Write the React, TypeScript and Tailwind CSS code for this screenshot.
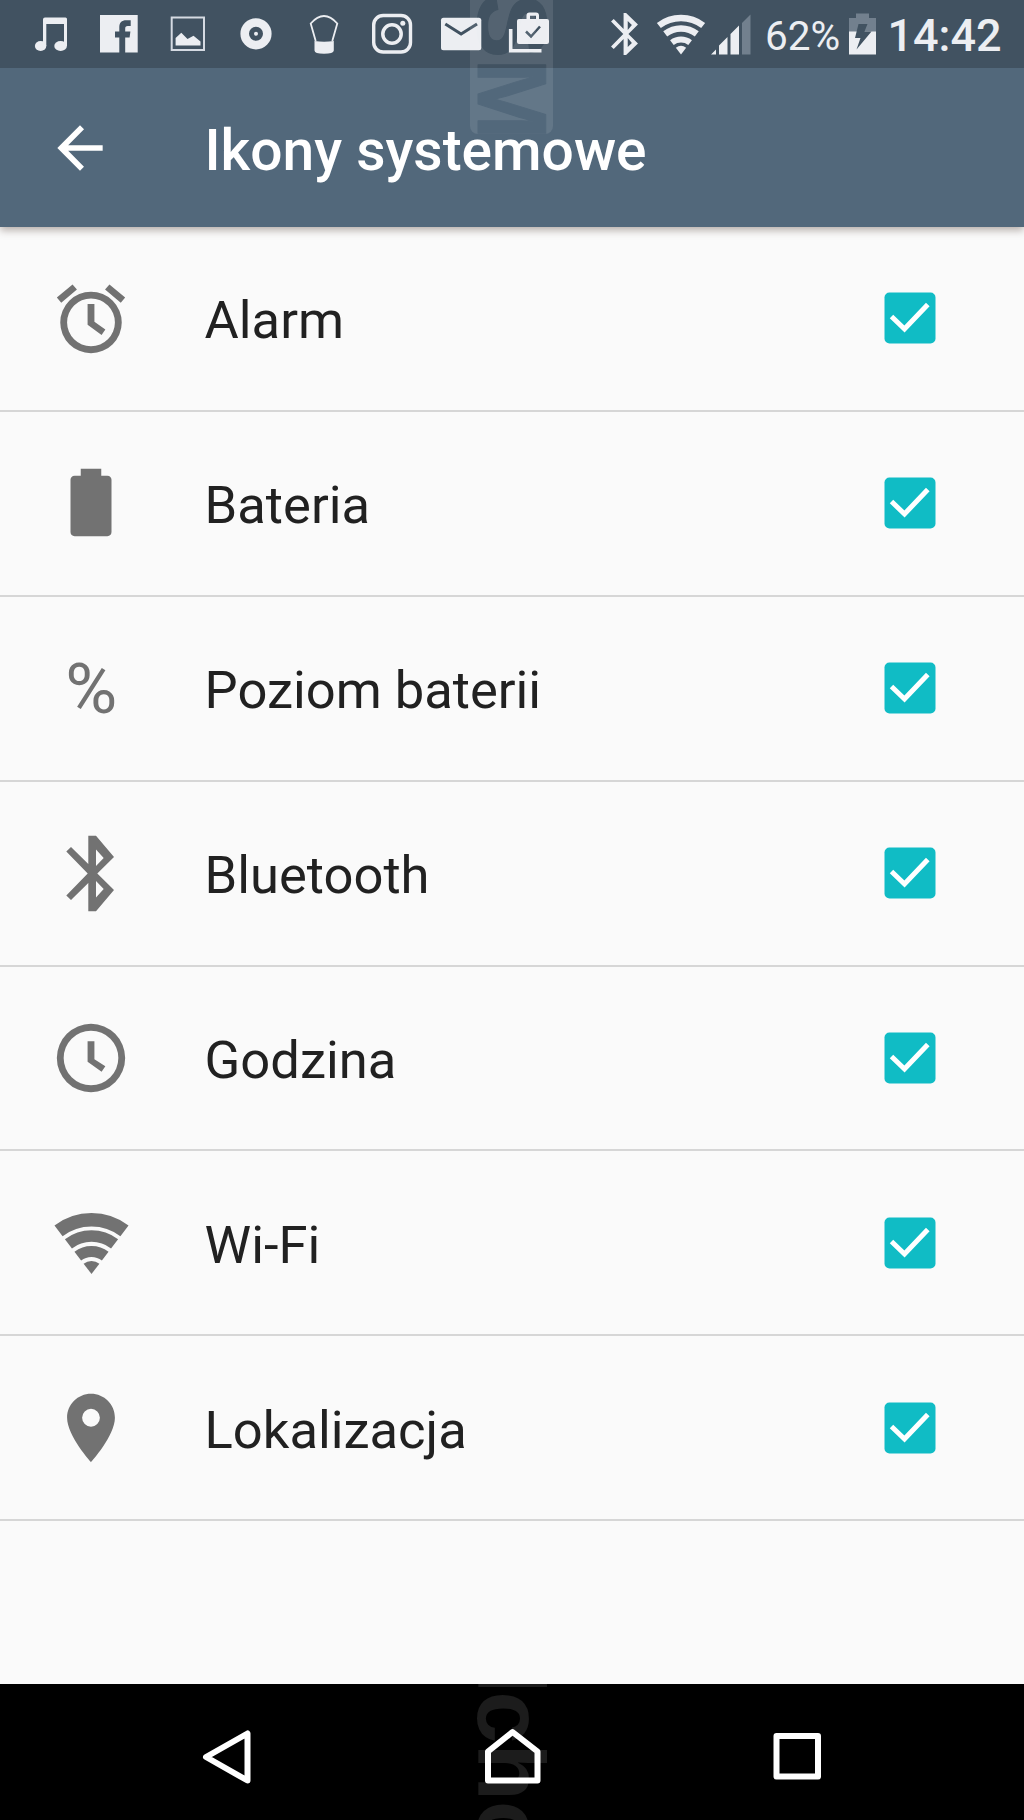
import React, { useState } from "react";

const iconStyle = "w-[82px] h-[82px] shrink-0 fill-[#727272]";
const statusStyle = "w-[68.3px] h-[68px] shrink-0 fill-[#eceef2]";

// Arc of a 75 degree fan whose tip is at 0,0
const arc = (r: number) =>
  `M${-0.607 * r} ${-0.794 * r}A${r} ${r} 0 0 1 ${0.607 * r} ${-0.794 * r}`;

const AlarmIcon = () => (
  <svg viewBox="0 -0.3 24 24" className={iconStyle}>
    <path d="M22 5.72l-4.6-3.86-1.29 1.53 4.6 3.86L22 5.72zM7.88 3.39L6.6 1.86 2 5.71l1.29 1.53 4.59-3.85zM13 7.6h-2v6.1l4.1 2.95 1.1-1.6-3.2-2.25V7.6zM12 4a9 9 0 1 0 0 18 9 9 0 0 0 0-18zm0 16a7 7 0 1 1 0-14 7 7 0 0 1 0 14z" />
  </svg>
);

const BatteryIcon = () => (
  <svg viewBox="0 0 24 24" className={iconStyle}>
    <path d="M16.8 4H15V2H9v2H7.2C6.5 4 6 4.500 6 5.200v15.300c0 .7.5 1.200 1.200 1.200h9.600c.7 0 1.200-.5 1.200-1.200V5.200c0-.7-.5-1.200-1.200-1.200z" />
  </svg>
);

const PercentIcon = () => (
  <span className="mt-[2px] w-[82px] shrink-0 text-center text-[71px] leading-[82px] text-[#727272]">
    %
  </span>
);

const BluetoothIcon = () => (
  <svg viewBox="0 0 82 82" className={iconStyle}>
    <path
      fillRule="evenodd"
      d="M38.3 3.7H46L64 25 47.3 41.5 64 58 46 79.3H38.3V51L21 68 16.3 63.5 37.7 41.5 16.3 19.5 21 15 38.3 32ZM46 17.5V34L53.7 26ZM46 49V65.5L53.7 57Z"
    />
  </svg>
);

const ClockIcon = () => (
  <svg viewBox="0 0 24 24" className={iconStyle}>
    <path d="M12 2a10 10 0 1 0 0 20 10 10 0 0 0 0-20zm0 18a8 8 0 1 1 0-16 8 8 0 0 1 0 16zM13 7.1h-2v6l4.1 2.95 1.1-1.6-3.2-2.05V7.1z" />
  </svg>
);

const WifiIcon = () => (
  <svg viewBox="-41.5 -72 82 82" className={iconStyle}>
    <g className="fill-none stroke-[#727272]">
      <path d={arc(54.3)} strokeWidth="13.4" />
      <path d={arc(38)} strokeWidth="11.6" />
      <path d={arc(22.6)} strokeWidth="11" />
    </g>
    <path d={`${arc(13)}L0 0Z`} />
  </svg>
);

const LocationIcon = () => (
  <svg viewBox="0 0 24 24" className={iconStyle}>
    <path d="M12 2C8.13 2 5 5.13 5 9c0 5.25 7 13 7 13s7-7.75 7-13c0-3.87-3.13-7-7-7zm0 9.6a2.6 2.6 0 1 1 0-5.2 2.6 2.6 0 0 1 0 5.2z" />
  </svg>
);

const items = [
  { name: "Alarm", Icon: AlarmIcon },
  { name: "Bateria", Icon: BatteryIcon },
  { name: "Poziom baterii", Icon: PercentIcon },
  { name: "Bluetooth", Icon: BluetoothIcon },
  { name: "Godzina", Icon: ClockIcon },
  { name: "Wi-Fi", Icon: WifiIcon },
  { name: "Lokalizacja", Icon: LocationIcon },
];

const StatusBar = () => (
  <div className="relative flex h-[68px] items-center bg-[#415261] pl-[17px] text-[#eceef2]">
    <svg viewBox="0 0 68.3 68" className={statusStyle}>
      <path d="M28 17.5h20.5a1.5 1.5 0 0 1 1.5 1.5v27h-3V24H29.3v22H26V19.5a2 2 0 0 1 2-2z" />
      <ellipse cx="23.6" cy="46" rx="5.7" ry="5" />
      <ellipse cx="43.6" cy="46" rx="6.3" ry="5" />
    </svg>
    <svg viewBox="0 0 68.3 68" className={statusStyle}>
      <path d="M15 15H52.7V52.6H40.2V37.5H44.6L45.4 31.5H40.2V29c0-2 .6-2.9 2.6-2.9h2.9V20.3h-4.4c-4.7 0-7 2.5-7 7v4.2H30v6h4.3V52.6H15Z" />
    </svg>
    <svg viewBox="0 0 68.3 68" className={statusStyle}>
      <rect x="17.7" y="17.5" width="32.3" height="32.5" className="fill-none stroke-[#d5dae2]" strokeWidth="2" />
      <path d="M21.6 45.5V38L27.3 32.8 33.5 39 39.5 35.7 46.5 41.5V45.5Z" />
    </svg>
    <svg viewBox="0 0 68.3 68" className={statusStyle}>
      <circle cx="34" cy="33.8" r="11.3" className="fill-none stroke-[#eceef2]" strokeWidth="8.6" />
      <circle cx="34" cy="33.8" r="2" />
    </svg>
    <svg viewBox="0 0 68.3 68" className={statusStyle}>
      <path
        d="M25.7 41L20.7 23.5Q34 8.5 47.3 23.5L42.3 41"
        className="fill-none stroke-[#eceef2]"
        strokeWidth="1.8"
      />
      <path d="M24.5 41Q34 42.5 43.8 41V50.5Q43.5 53.7 34 53.7T24.5 50.5Z" />
    </svg>
    <svg viewBox="0 0 68.3 68" className={statusStyle}>
      <g className="fill-none stroke-[#eceef2]">
        <rect x="15.7" y="15.5" width="36.8" height="36.5" rx="9.5" strokeWidth="3.4" />
        <circle cx="34" cy="34" r="9.2" strokeWidth="3.5" />
      </g>
      <circle cx="44.8" cy="23.3" r="2.5" />
    </svg>
    <svg viewBox="0 0 68.3 68" className={statusStyle}>
      <rect x="14" y="17.8" width="40.3" height="32.4" rx="2.5" />
      <path d="M18.3 24L34.1 34 50 24" className="fill-none stroke-[#415261]" strokeWidth="3" />
    </svg>
    <svg viewBox="0 0 68.3 68" className={statusStyle}>
      <path d="M15.7 29V50.7H46.5" className="fill-none stroke-[#eceef2]" strokeWidth="3.6" />
      <path
        fillRule="evenodd"
        d="M31.5 19V15.5a3 3 0 0 1 3-3h6.5a3 3 0 0 1 3 3V19H52a2 2 0 0 1 2 2V42a2 2 0 0 1-2 2H24a2 2 0 0 1-2-2V21a2 2 0 0 1 2-2ZM35 19H41V15.8H35Z"
      />
      <path d="M31 31.5L36 36.5 45 26.5" className="fill-none stroke-[#415261]" strokeWidth="2.5" />
    </svg>
    <svg viewBox="15 2.5 50 78" className="ml-[47.5px] h-[42px] w-[27px] fill-[#eceef2]">
      <path
        fillRule="evenodd"
        d="M38.3 2.5H43L65 24 47.3 41.5 65 59 43 80.5H38.3V51L20 69.5 15 64.5 37.7 41.5 15 18.5 20 13.5 38.3 32ZM46 17.5V34L53.7 25ZM46 49V65.5L53.7 58Z"
      />
    </svg>
    <svg viewBox="-25 -40.5 50 41" className="ml-[18.5px] h-[41px] w-[50px] fill-[#eceef2]">
      <g className="fill-none stroke-[#eceef2]">
        <path d={arc(36.5)} strokeWidth="6.5" />
        <path d={arc(26)} strokeWidth="6.5" />
        <path d={arc(15)} strokeWidth="6" />
      </g>
      <path d={`${arc(8.5)}L0 0Z`} />
    </svg>
    <svg viewBox="0 0 41 41" className="ml-[5px] h-[41px] w-[41px] fill-[#eceef2]">
      <path d="M0 40.5L5 35.5V40.5ZM8 40.5V31.5L16.5 23V40.5ZM19.5 40.5V20L28 11.5V40.5Z" />
      <path d="M31 40.5V9L39.5 0.5V40.5Z" className="fill-[#72808e]" />
    </svg>
    <span className="ml-[12.5px] mt-[4px] w-[76px] whitespace-nowrap text-[40.5px] leading-none">62%</span>
    <svg viewBox="0 0 27 42" className="ml-[8px] mt-[-1px] h-[42px] w-[27px]">
      <path d="M0 19V5H7V.5H20V5H27V19Z" className="fill-[#72808e]" />
      <path d="M0 18.5H27V41.5H0Z" className="fill-[#eceef2]" />
      <path d="M9.5 11H18.5L15.5 18.5H22.5L7.5 36.5 11.5 25H6Z" className="fill-[#415261]" />
    </svg>
    <span className="ml-[11.5px] mt-[2px] whitespace-nowrap text-[45px] font-medium leading-none">14:42</span>
  </div>
);

const Checkbox = ({ checked }: { checked: boolean }) => (
  <svg viewBox="0 0 52 52" className="ml-auto h-[52px] w-[52px]">
    <rect x=".5" y=".5" width="51" height="51" rx="5" className={checked ? "fill-[#10bcc5]" : "fill-[#727272]"} />
    {checked && (
      <path d="M7.5 24.5L20.5 37 43.8 12.5" className="fill-none stroke-white" strokeWidth="5" />
    )}
  </svg>
);

const App: React.FC = () => {
  const [hidden, setHidden] = useState<string[]>([]);

  const toggle = (name: string) =>
    setHidden((prev) =>
      prev.includes(name) ? prev.filter((n) => n !== name) : [...prev, name]
    );

  return (
    <div className="flex h-[1820px] w-[1024px] flex-col overflow-hidden bg-[#fafafa] font-['Roboto',sans-serif]">
      <header className="relative shrink-0 shadow-[0_3px_8px_rgba(70,50,40,0.4)]">
        <StatusBar />
        <div className="flex h-[159px] items-center bg-[#52687b] pl-[45.7px]">
          <svg viewBox="0 0 24 24" className="h-[68px] w-[68px] fill-white">
            <path d="M20 11H7.83l5.59-5.59L12 4l-8 8 8 8 1.41-1.41L7.83 13H20v-2z" />
          </svg>
          <h1 className="ml-[90.8px] mt-[7px] text-[56.9px] font-medium leading-none text-white">
            Ikony systemowe
          </h1>
        </div>
        <svg viewBox="0 0 84 136" className="pointer-events-none absolute left-[470px] top-0 h-[136px] w-[84px]">
          <mask id="badge">
            <rect width="84" height="136" fill="white" />
            <text
              transform="translate(8 -7) rotate(90)"
              className="font-['Liberation_Sans',sans-serif] text-[98px] font-bold"
              fill="black"
              stroke="black"
              strokeWidth="1"
              strokeLinejoin="round"
            >
              SM
            </text>
          </mask>
          <rect y="-20" width="83" height="154" rx="8" mask="url(#badge)" className="fill-white/10" />
        </svg>
      </header>

      <ul>
        {items.map(({ name, Icon }) => (
          <li
            key={name}
            onClick={() => toggle(name)}
            className="flex h-[184.9px] items-center border-b-2 border-[#d6d6d6] pl-[50.3px] pr-[87.7px]"
          >
            <Icon />
            <span className="ml-[72.3px] mt-[4px] text-[52.5px] leading-none text-[#212121]">{name}</span>
            <Checkbox checked={!hidden.includes(name)} />
          </li>
        ))}
      </ul>

      <nav className="relative mt-auto flex h-[136px] shrink-0 gap-[206px] overflow-hidden bg-black pl-[186px]">
        <svg viewBox="0 0 90 136" className="pointer-events-none absolute left-[470px] top-0 h-[136px] w-[90px]">
          <text
            transform="translate(8 -19) rotate(90)"
            dx="2.5 -2.5"
            className="fill-[#1c1c1c] font-['Liberation_Sans',sans-serif] text-[94px] font-bold"
          >
            lcho
          </text>
        </svg>
        <svg viewBox="0 0 80 136" className="relative h-[136px] w-[80px] fill-none stroke-white stroke-[6]">
          <path d="M20 73L61.5 49.5V96.5Z" strokeLinejoin="round" />
        </svg>
        <svg viewBox="0 0 80 136" className="relative h-[136px] w-[80px] fill-none stroke-white stroke-[6]">
          <path d="M40.5 48L65.5 67.5V96.5H16V67.5Z" strokeLinejoin="round" />
        </svg>
        <svg viewBox="0 0 80 136" className="relative h-[136px] w-[80px] fill-none stroke-white stroke-[6]">
          <path d="M18.5 52H60V92.5H18.5Z" strokeLinejoin="round" />
        </svg>
      </nav>
    </div>
  );
};

export default App;
